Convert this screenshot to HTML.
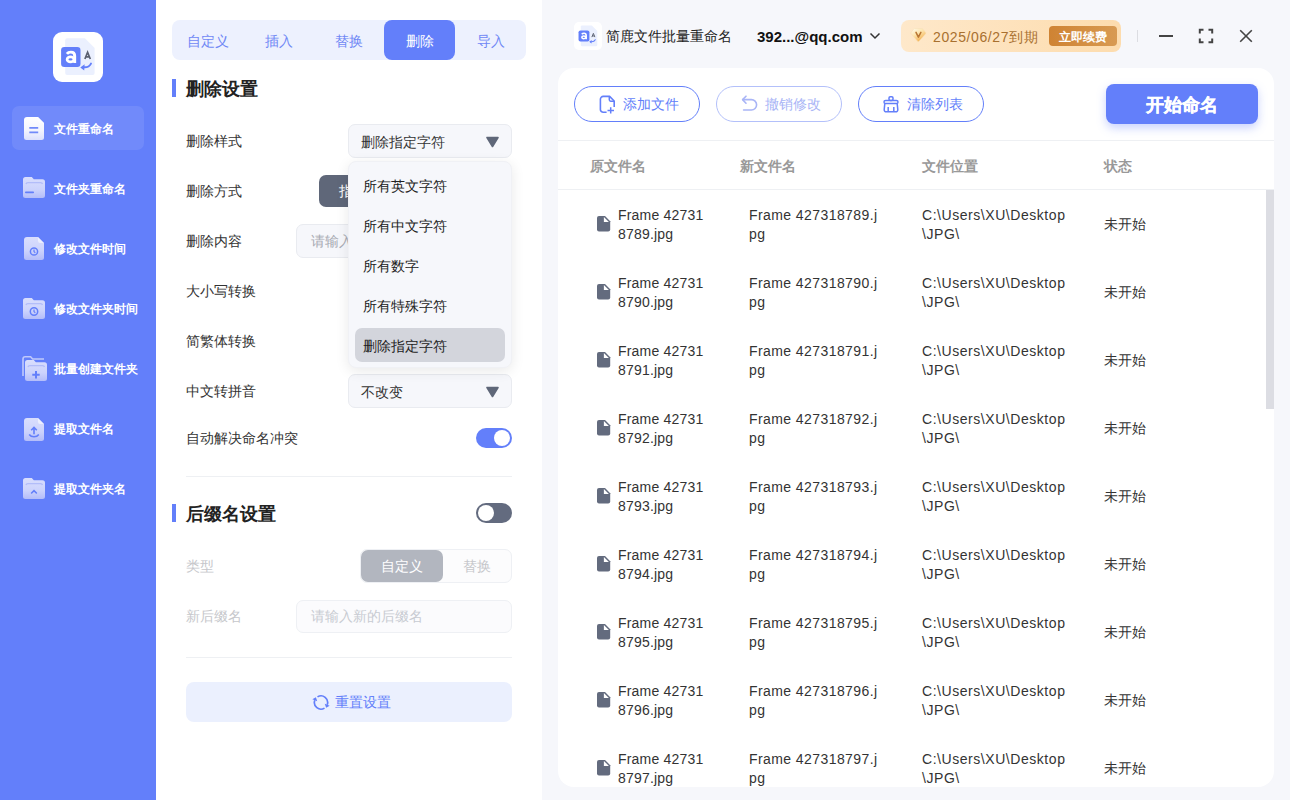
<!DOCTYPE html>
<html><head><meta charset="utf-8">
<style>
*{box-sizing:border-box;margin:0;padding:0}
html,body{width:1290px;height:800px;overflow:hidden}
body{position:relative;background:#f6f7fb;font-family:"Liberation Sans",sans-serif;font-size:14px;color:#333}
.abs{position:absolute}
#side{left:0;top:0;width:156px;height:800px;background:#637ffa}
#mid{left:156px;top:0;width:386px;height:800px;background:#fff}
.nav{position:absolute;left:12px;width:132px;height:44px;border-radius:7px}
.nav.on{background:rgba(255,255,255,.09)}
.nav svg{position:absolute;left:11px;top:10px}
.nav span{position:absolute;left:42px;top:1px;line-height:44px;font-size:12px;font-weight:bold;color:#fff;white-space:nowrap}
.tabs{left:172px;top:20px;width:354px;height:40px;background:#edf1fe;border-radius:8px}
.tab{position:absolute;top:0;height:40px;line-height:42px;text-align:center;color:#7088f5;font-size:14px}
.tab.on{background:#637ffa;color:#fff;border-radius:8px}
.bar{position:absolute;left:172px;width:4px;height:18px;background:#637ffa}
.h{position:absolute;left:186px;font-size:18px;font-weight:bold;color:#222;line-height:24px}
.lbl{position:absolute;left:186px;font-size:14px;color:#333;line-height:20px}
.sel{position:absolute;background:#f6f7fb;border:1px solid #e9ebf0;border-radius:7px}
.tri{position:absolute;width:0;height:0;border-left:6.5px solid transparent;border-right:6.5px solid transparent;border-top:10px solid #5f6779}
.txt{position:absolute;white-space:nowrap;line-height:20px}
.tog{position:absolute;width:36px;height:20px;border-radius:10px}
.tog i{position:absolute;top:2px;width:16px;height:16px;border-radius:50%;background:#fff}
.hr{position:absolute;left:186px;width:326px;height:1px;background:#eef0f3}
#card{left:558px;top:68px;width:716px;height:719px;background:#fff;border-radius:16px;overflow:hidden}
.btn{position:absolute;top:86px;height:36px;border-radius:18px;border:1px solid #637ffa;color:#637ffa;font-size:14px;line-height:34px}
.th{position:absolute;top:156px;font-size:14px;font-weight:bold;color:#999;line-height:20px}
.row{position:absolute;left:0;width:708px;height:68px}
.fi{position:absolute;left:39px;top:26px;margin-left:.2px}
.st{position:absolute;left:546px;top:24px;line-height:20px;font-size:14px;color:#333}
.cell{position:absolute;top:16px;font-size:14px;line-height:19px;color:#333;white-space:nowrap}
</style></head><body>
<div id="side" class="abs">
  <svg width="50" height="50" viewBox="0 0 50 50" style="position:absolute;left:53px;top:32px"><rect width="50" height="50" rx="9" fill="#fff"/><path d="M14.2 6.2H31.9L41.6 15.9V41.1A2 2 0 0 1 39.6 43.1H14.2A2 2 0 0 1 12.2 41.1V8.2A2 2 0 0 1 14.2 6.2Z" fill="#ebf0fe"/><rect x="8.1" y="15" width="19.4" height="20" rx="3.2" fill="#637ffa"/><path d="M13.9 21.9C14.9 20.6 16.3 20.1 17.9 20.1C20.5 20.1 21.7 21.4 21.7 23.9V30.9" stroke="#fff" stroke-width="2.9" fill="none"/><ellipse cx="17.5" cy="27.4" rx="3.4" ry="2.5" stroke="#fff" stroke-width="2.7" fill="none"/><path d="M31.9 27L34.6 20.3L37.3 27M32.8 24.9H36.4" stroke="#5a6070" stroke-width="1.7" fill="none"/><path d="M38 31.6C36.5 34.5 33.5 35.6 30.2 35.2" stroke="#637ffa" stroke-width="1.9" fill="none" stroke-linecap="round"/><path d="M27.3 35.4L31.6 32.3L31.2 38.6Z" fill="#637ffa"/></svg>
  <svg width="0" height="0" style="position:absolute"><defs>
<linearGradient id="gw" x1="0" y1="0" x2="0" y2="1"><stop offset="0" stop-color="#ffffff"/><stop offset=".55" stop-color="#f4f5fe"/><stop offset="1" stop-color="#d9defd"/></linearGradient>
<linearGradient id="gl" x1="0" y1="0" x2="0" y2="1"><stop offset="0" stop-color="#d9defd"/><stop offset=".6" stop-color="#ccd3fc"/><stop offset="1" stop-color="#b4bdf9"/></linearGradient>
</defs></svg>
<svg class="abs" style="left:24px;top:117px" width="20" height="23" viewBox="0 0 20 23"><path d="M3 0H14L20 6V20.5A2.5 2.5 0 0 1 17.5 23H2.5A2.5 2.5 0 0 1 0 20.5V3A3 3 0 0 1 3 0Z" fill="url(#gw)"/><path d="M14 0V3.8A2.2 2.2 0 0 0 16.2 6H20Z" fill="#fff" opacity=".55"/><path d="M5.3 10.8H14.2M5.3 15.3H14.2" stroke="#637ffa" stroke-width="1.8"/></svg>
<svg class="abs" style="left:23px;top:177px" width="22" height="21" viewBox="0 0 22 21"><path d="M2.5 0H8.8L10.8 2.2H19.5A2.5 2.5 0 0 1 22 4.7V18.5A2.5 2.5 0 0 1 19.5 21H2.5A2.5 2.5 0 0 1 0 18.5V2.5A2.5 2.5 0 0 1 2.5 0Z" fill="url(#gl)"/><path d="M3 7A2 2 0 0 1 5 5.6H17.5A2 2 0 0 1 19.5 7" stroke="#aab5f8" stroke-width="1.4" fill="none" opacity=".8"/><path d="M2.8 15.4H10.2" stroke="#637ffa" stroke-width="1.6" stroke-linecap="round"/></svg>
<svg class="abs" style="left:24px;top:237px" width="20" height="23" viewBox="0 0 20 23"><path d="M3 0H14L20 6V20.5A2.5 2.5 0 0 1 17.5 23H2.5A2.5 2.5 0 0 1 0 20.5V3A3 3 0 0 1 3 0Z" fill="url(#gl)"/><path d="M14 0V3.8A2.2 2.2 0 0 0 16.2 6H20Z" fill="#fff" opacity=".55"/><circle cx="10" cy="14.5" r="3.6" stroke="#637ffa" stroke-width="1.5" fill="none"/><path d="M10 12.6V14.6L11.3 15.8" stroke="#637ffa" stroke-width="1.2" fill="none"/></svg>
<svg class="abs" style="left:23px;top:298px" width="22" height="21" viewBox="0 0 22 21"><path d="M2.5 0H8.8L10.8 2.2H19.5A2.5 2.5 0 0 1 22 4.7V18.5A2.5 2.5 0 0 1 19.5 21H2.5A2.5 2.5 0 0 1 0 18.5V2.5A2.5 2.5 0 0 1 2.5 0Z" fill="url(#gl)"/><path d="M3 7A2 2 0 0 1 5 5.6H17.5A2 2 0 0 1 19.5 7" stroke="#aab5f8" stroke-width="1.4" fill="none" opacity=".8"/><circle cx="11" cy="13.5" r="3.7" stroke="#637ffa" stroke-width="1.5" fill="none"/><path d="M11 11.6V13.6L12.3 14.8" stroke="#637ffa" stroke-width="1.2" fill="none"/></svg>
<svg class="abs" style="left:22px;top:356px" width="25" height="25" viewBox="0 0 25 25"><path d="M1 20V3A2.2 2.2 0 0 1 3.2 0.8H8.6L10.6 3H22" stroke="#d0d6fc" stroke-width="1.6" fill="none" opacity=".85"/><g transform="translate(3,4)"><path d="M2.5 0H8.8L10.8 2.2H19.5A2.5 2.5 0 0 1 22 4.7V18.5A2.5 2.5 0 0 1 19.5 21H2.5A2.5 2.5 0 0 1 0 18.5V2.5A2.5 2.5 0 0 1 2.5 0Z" fill="url(#gl)"/><path d="M3 7A2 2 0 0 1 5 5.6H17.5A2 2 0 0 1 19.5 7" stroke="#aab5f8" stroke-width="1.4" fill="none" opacity=".8"/><path d="M11 11V18.4M7.3 14.7H14.7" stroke="#637ffa" stroke-width="2"/></g></svg>
<svg class="abs" style="left:24px;top:418px" width="20" height="23" viewBox="0 0 20 23"><path d="M3 0H14L20 6V20.5A2.5 2.5 0 0 1 17.5 23H2.5A2.5 2.5 0 0 1 0 20.5V3A3 3 0 0 1 3 0Z" fill="url(#gl)"/><path d="M14 0V3.8A2.2 2.2 0 0 0 16.2 6H20Z" fill="#fff" opacity=".55"/><path d="M10 16.2V9.6M7.2 12.2L10 9.4L12.8 12.2" stroke="#637ffa" stroke-width="1.6" fill="none"/><path d="M5.2 16.5C6.5 18.3 8.2 18.8 10 18.8S13.5 18.3 14.8 16.5" stroke="#637ffa" stroke-width="1.5" fill="none"/></svg>
<svg class="abs" style="left:23px;top:478px" width="22" height="21" viewBox="0 0 22 21"><path d="M2.5 0H8.8L10.8 2.2H19.5A2.5 2.5 0 0 1 22 4.7V18.5A2.5 2.5 0 0 1 19.5 21H2.5A2.5 2.5 0 0 1 0 18.5V2.5A2.5 2.5 0 0 1 2.5 0Z" fill="url(#gl)"/><path d="M3 7A2 2 0 0 1 5 5.6H17.5A2 2 0 0 1 19.5 7" stroke="#aab5f8" stroke-width="1.4" fill="none" opacity=".8"/><path d="M8.6 15L11 12.6L13.4 15" stroke="#637ffa" stroke-width="1.6" fill="none" stroke-linecap="round"/></svg>
<div class="nav on" style="top:106px"><span>文件重命名</span></div>
  <div class="nav" style="top:166px"><span>文件夹重命名</span></div>
  <div class="nav" style="top:226px"><span>修改文件时间</span></div>
  <div class="nav" style="top:286px"><span>修改文件夹时间</span></div>
  <div class="nav" style="top:346px"><span>批量创建文件夹</span></div>
  <div class="nav" style="top:406px"><span>提取文件名</span></div>
  <div class="nav" style="top:466px"><span>提取文件夹名</span></div>
</div>
<div id="mid" class="abs"></div>
<div class="abs tabs">
  <div class="tab" style="left:0;width:71px">自定义</div>
  <div class="tab" style="left:71px;width:71px">插入</div>
  <div class="tab" style="left:141px;width:71px">替换</div>
  <div class="tab on" style="left:212px;width:71px">删除</div>
  <div class="tab" style="left:283px;width:71px">导入</div>
</div>
<div class="bar" style="top:79px"></div>
<div class="h" style="top:77px">删除设置</div>

<div class="lbl" style="top:131px">删除样式</div>
<div class="lbl" style="top:181px">删除方式</div>
<div class="lbl" style="top:231px">删除内容</div>
<div class="lbl" style="top:281px">大小写转换</div>
<div class="lbl" style="top:331px">简繁体转换</div>
<div class="lbl" style="top:381px">中文转拼音</div>
<div class="lbl" style="top:428px">自动解决命名冲突</div>

<div class="sel" style="left:348px;top:124px;width:164px;height:34px"></div>
<div class="txt" style="left:361px;top:132px">删除指定字符</div>
<svg class="abs" style="left:485px;top:136px" width="15" height="12" viewBox="0 0 15 12"><path d="M2 1.5H13L7.5 10.5Z" fill="#5f6779" stroke="#5f6779" stroke-width="1.6" stroke-linejoin="round"/></svg>

<div class="abs" style="left:319px;top:175px;width:60px;height:32px;background:#5f6779;border-radius:7px"></div>
<div class="txt" style="left:339px;top:181px;color:#fff">指定</div>

<div class="sel" style="left:296px;top:224px;width:216px;height:34px"></div>
<div class="txt" style="left:311px;top:231px;color:#a8abb3">请输入</div>

<div class="sel" style="left:348px;top:374px;width:164px;height:34px"></div>
<div class="txt" style="left:361px;top:382px">不改变</div>
<svg class="abs" style="left:485px;top:386px" width="15" height="12" viewBox="0 0 15 12"><path d="M2 1.5H13L7.5 10.5Z" fill="#5f6779" stroke="#5f6779" stroke-width="1.6" stroke-linejoin="round"/></svg>

<div class="tog" style="left:476px;top:428px;background:#637ffa"><i style="left:18px"></i></div>
<div class="hr" style="top:476px"></div>

<!-- dropdown -->
<div class="abs" style="left:348px;top:161px;width:164px;height:207px;background:#f6f7fb;border:1px solid #f0f1f5;border-radius:8px;box-shadow:0 3px 14px rgba(0,0,0,.09)"></div>
<div class="txt" style="left:363px;top:176px;color:#222">所有英文字符</div>
<div class="txt" style="left:363px;top:216px;color:#222">所有中文字符</div>
<div class="txt" style="left:363px;top:256px;color:#222">所有数字</div>
<div class="txt" style="left:363px;top:296px;color:#222">所有特殊字符</div>
<div class="abs" style="left:355px;top:328px;width:150px;height:34px;background:#d3d5dc;border-radius:7px"></div>
<div class="txt" style="left:363px;top:336px;color:#222">删除指定字符</div>

<div class="bar" style="top:504px"></div>
<div class="h" style="top:502px">后缀名设置</div>
<div class="tog" style="left:476px;top:503px;background:#636b7f"><i style="left:2px"></i></div>

<div class="lbl" style="top:556px;color:#c6c7cb">类型</div>
<div class="abs" style="left:360px;top:549px;width:152px;height:34px;border:1px solid #eef0f4;border-radius:7px;background:#fcfcfd"></div>
<div class="abs" style="left:361px;top:550px;width:82px;height:32px;background:#b2b6bf;border-radius:7px"></div>
<div class="txt" style="left:381px;top:556px;color:#fff">自定义</div>
<div class="txt" style="left:463px;top:556px;color:#c6c7cb">替换</div>

<div class="lbl" style="top:606px;color:#c6c7cb">新后缀名</div>
<div class="sel" style="left:296px;top:600px;width:216px;height:33px;background:#fbfbfd;border-color:#eef0f4"></div>
<div class="txt" style="left:311px;top:606px;color:#c8cbd2">请输入新的后缀名</div>

<div class="hr" style="top:657px"></div>
<div class="abs" style="left:186px;top:682px;width:326px;height:40px;background:#ebf0fe;border-radius:8px"></div>
<div class="txt" style="left:335px;top:692px;color:#637ffa">重置设置</div>

<!-- right header -->
<svg width="28" height="28" viewBox="0 0 50 50" style="position:absolute;left:574px;top:22px"><rect width="50" height="50" rx="9" fill="#fff"/><path d="M14.2 6.2H31.9L41.6 15.9V41.1A2 2 0 0 1 39.6 43.1H14.2A2 2 0 0 1 12.2 41.1V8.2A2 2 0 0 1 14.2 6.2Z" fill="#ebf0fe"/><rect x="8.1" y="15" width="19.4" height="20" rx="3.2" fill="#637ffa"/><path d="M13.9 21.9C14.9 20.6 16.3 20.1 17.9 20.1C20.5 20.1 21.7 21.4 21.7 23.9V30.9" stroke="#fff" stroke-width="2.9" fill="none"/><ellipse cx="17.5" cy="27.4" rx="3.4" ry="2.5" stroke="#fff" stroke-width="2.7" fill="none"/><path d="M31.9 27L34.6 20.3L37.3 27M32.8 24.9H36.4" stroke="#5a6070" stroke-width="1.7" fill="none"/><path d="M38 31.6C36.5 34.5 33.5 35.6 30.2 35.2" stroke="#637ffa" stroke-width="1.9" fill="none" stroke-linecap="round"/><path d="M27.3 35.4L31.6 32.3L31.2 38.6Z" fill="#637ffa"/></svg>
<div class="txt" style="left:606px;top:26px;color:#222">简鹿文件批量重命名</div>
<div class="txt" style="left:757px;top:27px;color:#111;font-weight:bold;font-size:15px">392...@qq.com</div>
<div class="abs" style="left:901px;top:20px;width:220px;height:32px;border-radius:8px;background:linear-gradient(90deg,#fee8ca,#fddcae)"></div>
<div class="txt" style="left:933px;top:27px;color:#a8702f;letter-spacing:.6px">2025/06/27到期</div>
<div class="abs" style="left:1049px;top:26px;width:68px;height:20px;border-radius:4px;background:linear-gradient(90deg,#cf8333,#d89a52)"></div>
<div class="txt" style="left:1059px;top:27px;color:#fff;font-size:12px;font-weight:bold">立即续费</div>

<div id="card" class="abs"></div>
<div class="btn" style="left:574px;width:126px"><span style="position:absolute;left:48px">添加文件</span></div>
<div class="btn" style="left:716px;width:126px;border-color:#b3c0fa;color:#a9b5f6"><span style="position:absolute;left:48px">撤销修改</span></div>
<div class="btn" style="left:858px;width:126px"><span style="position:absolute;left:48px">清除列表</span></div>
<div class="abs" style="left:1106px;top:84px;width:152px;height:40px;border-radius:8px;background:#637ffa;box-shadow:0 4px 10px rgba(99,127,250,.35);color:#fff;font-size:18px;font-weight:bold;text-align:center;line-height:42px;-webkit-text-stroke:.3px #fff">开始命名</div>
<div class="abs" style="left:558px;top:140px;width:716px;height:1px;background:#eef0f3"></div>
<div class="th" style="left:590px">原文件名</div>
<div class="th" style="left:740px">新文件名</div>
<div class="th" style="left:922px">文件位置</div>
<div class="th" style="left:1104px">状态</div>
<div class="abs" style="left:558px;top:189px;width:716px;height:1px;background:#eef0f3"></div>
<div class="abs" style="left:1266px;top:190px;width:8px;height:219px;background:#dcdde3"></div>
<div id="rows" class="abs" style="left:558px;top:190px;width:708px;height:597px;overflow:hidden">
<div class="row" style="top:0px">
<svg class="fi" width="14" height="16" viewBox="0 0 14 16"><path d="M2 0H8L13.2 5.2V13.6A2 2 0 0 1 11.2 15.6H2A2 2 0 0 1 0 13.6V2A2 2 0 0 1 2 0Z" fill="#636b7e"/><path d="M6.9 0.9V5.9H11.9Z" fill="#fff"/></svg>
<div class="cell" style="left:60px;letter-spacing:.2px">Frame 42731<br>8789.jpg</div>
<div class="cell" style="left:191px;letter-spacing:.42px">Frame 427318789.j<br>pg</div>
<div class="cell" style="left:364px;letter-spacing:.55px">C:\Users\XU\Desktop<br>\JPG\</div>
<div class="st">未开始</div>
</div>
<div class="row" style="top:68px">
<svg class="fi" width="14" height="16" viewBox="0 0 14 16"><path d="M2 0H8L13.2 5.2V13.6A2 2 0 0 1 11.2 15.6H2A2 2 0 0 1 0 13.6V2A2 2 0 0 1 2 0Z" fill="#636b7e"/><path d="M6.9 0.9V5.9H11.9Z" fill="#fff"/></svg>
<div class="cell" style="left:60px;letter-spacing:.2px">Frame 42731<br>8790.jpg</div>
<div class="cell" style="left:191px;letter-spacing:.42px">Frame 427318790.j<br>pg</div>
<div class="cell" style="left:364px;letter-spacing:.55px">C:\Users\XU\Desktop<br>\JPG\</div>
<div class="st">未开始</div>
</div>
<div class="row" style="top:136px">
<svg class="fi" width="14" height="16" viewBox="0 0 14 16"><path d="M2 0H8L13.2 5.2V13.6A2 2 0 0 1 11.2 15.6H2A2 2 0 0 1 0 13.6V2A2 2 0 0 1 2 0Z" fill="#636b7e"/><path d="M6.9 0.9V5.9H11.9Z" fill="#fff"/></svg>
<div class="cell" style="left:60px;letter-spacing:.2px">Frame 42731<br>8791.jpg</div>
<div class="cell" style="left:191px;letter-spacing:.42px">Frame 427318791.j<br>pg</div>
<div class="cell" style="left:364px;letter-spacing:.55px">C:\Users\XU\Desktop<br>\JPG\</div>
<div class="st">未开始</div>
</div>
<div class="row" style="top:204px">
<svg class="fi" width="14" height="16" viewBox="0 0 14 16"><path d="M2 0H8L13.2 5.2V13.6A2 2 0 0 1 11.2 15.6H2A2 2 0 0 1 0 13.6V2A2 2 0 0 1 2 0Z" fill="#636b7e"/><path d="M6.9 0.9V5.9H11.9Z" fill="#fff"/></svg>
<div class="cell" style="left:60px;letter-spacing:.2px">Frame 42731<br>8792.jpg</div>
<div class="cell" style="left:191px;letter-spacing:.42px">Frame 427318792.j<br>pg</div>
<div class="cell" style="left:364px;letter-spacing:.55px">C:\Users\XU\Desktop<br>\JPG\</div>
<div class="st">未开始</div>
</div>
<div class="row" style="top:272px">
<svg class="fi" width="14" height="16" viewBox="0 0 14 16"><path d="M2 0H8L13.2 5.2V13.6A2 2 0 0 1 11.2 15.6H2A2 2 0 0 1 0 13.6V2A2 2 0 0 1 2 0Z" fill="#636b7e"/><path d="M6.9 0.9V5.9H11.9Z" fill="#fff"/></svg>
<div class="cell" style="left:60px;letter-spacing:.2px">Frame 42731<br>8793.jpg</div>
<div class="cell" style="left:191px;letter-spacing:.42px">Frame 427318793.j<br>pg</div>
<div class="cell" style="left:364px;letter-spacing:.55px">C:\Users\XU\Desktop<br>\JPG\</div>
<div class="st">未开始</div>
</div>
<div class="row" style="top:340px">
<svg class="fi" width="14" height="16" viewBox="0 0 14 16"><path d="M2 0H8L13.2 5.2V13.6A2 2 0 0 1 11.2 15.6H2A2 2 0 0 1 0 13.6V2A2 2 0 0 1 2 0Z" fill="#636b7e"/><path d="M6.9 0.9V5.9H11.9Z" fill="#fff"/></svg>
<div class="cell" style="left:60px;letter-spacing:.2px">Frame 42731<br>8794.jpg</div>
<div class="cell" style="left:191px;letter-spacing:.42px">Frame 427318794.j<br>pg</div>
<div class="cell" style="left:364px;letter-spacing:.55px">C:\Users\XU\Desktop<br>\JPG\</div>
<div class="st">未开始</div>
</div>
<div class="row" style="top:408px">
<svg class="fi" width="14" height="16" viewBox="0 0 14 16"><path d="M2 0H8L13.2 5.2V13.6A2 2 0 0 1 11.2 15.6H2A2 2 0 0 1 0 13.6V2A2 2 0 0 1 2 0Z" fill="#636b7e"/><path d="M6.9 0.9V5.9H11.9Z" fill="#fff"/></svg>
<div class="cell" style="left:60px;letter-spacing:.2px">Frame 42731<br>8795.jpg</div>
<div class="cell" style="left:191px;letter-spacing:.42px">Frame 427318795.j<br>pg</div>
<div class="cell" style="left:364px;letter-spacing:.55px">C:\Users\XU\Desktop<br>\JPG\</div>
<div class="st">未开始</div>
</div>
<div class="row" style="top:476px">
<svg class="fi" width="14" height="16" viewBox="0 0 14 16"><path d="M2 0H8L13.2 5.2V13.6A2 2 0 0 1 11.2 15.6H2A2 2 0 0 1 0 13.6V2A2 2 0 0 1 2 0Z" fill="#636b7e"/><path d="M6.9 0.9V5.9H11.9Z" fill="#fff"/></svg>
<div class="cell" style="left:60px;letter-spacing:.2px">Frame 42731<br>8796.jpg</div>
<div class="cell" style="left:191px;letter-spacing:.42px">Frame 427318796.j<br>pg</div>
<div class="cell" style="left:364px;letter-spacing:.55px">C:\Users\XU\Desktop<br>\JPG\</div>
<div class="st">未开始</div>
</div>
<div class="row" style="top:544px">
<svg class="fi" width="14" height="16" viewBox="0 0 14 16"><path d="M2 0H8L13.2 5.2V13.6A2 2 0 0 1 11.2 15.6H2A2 2 0 0 1 0 13.6V2A2 2 0 0 1 2 0Z" fill="#636b7e"/><path d="M6.9 0.9V5.9H11.9Z" fill="#fff"/></svg>
<div class="cell" style="left:60px;letter-spacing:.2px">Frame 42731<br>8797.jpg</div>
<div class="cell" style="left:191px;letter-spacing:.42px">Frame 427318797.j<br>pg</div>
<div class="cell" style="left:364px;letter-spacing:.55px">C:\Users\XU\Desktop<br>\JPG\</div>
<div class="st">未开始</div>
</div>
</div>

<svg class="abs" style="left:599px;top:95px" width="17" height="19" viewBox="0 0 17 19"><path d="M7.6 17.2H4.2A2.8 2.8 0 0 1 1.4 14.4V4.2A2.8 2.8 0 0 1 4.2 1.4H10.6L15.2 6V12" stroke="#637ffa" stroke-width="1.6" fill="none" stroke-linejoin="round"/><path d="M10.3 1.6V4.8A1.4 1.4 0 0 0 11.7 6.2H15" stroke="#637ffa" stroke-width="1.5" fill="none"/><path d="M11.7 12.2V18.6M8.5 15.4H15" stroke="#637ffa" stroke-width="1.5"/></svg>
<svg class="abs" style="left:741px;top:95px" width="17" height="17" viewBox="0 0 17 17"><path d="M5 1.2L1.6 4.6L5 8.2" stroke="#a9b5f6" stroke-width="1.6" fill="none" stroke-linecap="round" stroke-linejoin="round"/><path d="M1.8 4.6H10.4A5.2 5.2 0 0 1 10.4 15H2.6" stroke="#a9b5f6" stroke-width="1.6" fill="none" stroke-linecap="round"/></svg>
<svg class="abs" style="left:883px;top:96px" width="16" height="17" viewBox="0 0 16 17"><rect x="6" y="0.8" width="4" height="3.6" rx="1.2" stroke="#637ffa" stroke-width="1.5" fill="none"/><rect x="1" y="4.4" width="14" height="3.2" rx="1.6" stroke="#637ffa" stroke-width="1.5" fill="none"/><path d="M1.8 7.6L1.2 13.6A2 2 0 0 0 3.2 15.8H12.8A2 2 0 0 0 14.8 13.6L14.2 7.6M5.2 11V15.6M10.8 11V15.6" stroke="#637ffa" stroke-width="1.5" fill="none"/></svg>
<svg class="abs" style="left:312px;top:694px" width="18" height="17" viewBox="0 0 18 17"><path d="M5.50 2.90A6.6 6.6 0 0 1 15.20 10.76" stroke="#637ffa" stroke-width="1.7" fill="none"/><path d="M14.11 13.76L17.65 11.65L12.76 9.87Z" fill="#637ffa"/><path d="M12.50 14.10A6.6 6.6 0 0 1 2.80 6.24" stroke="#637ffa" stroke-width="1.7" fill="none"/><path d="M3.89 3.24L0.35 5.35L5.24 7.13Z" fill="#637ffa"/></svg>
<svg class="abs" style="left:910px;top:28px" width="17" height="15" viewBox="0 0 17 15"><defs><linearGradient id="gd" x1="0" y1="0" x2="0.7" y2="1"><stop offset="0" stop-color="#fffdf4"/><stop offset=".45" stop-color="#fde6b0"/><stop offset="1" stop-color="#f3aa45"/></linearGradient></defs><path d="M4.6 0.6H11.6Q12.4 0.6 13 1.3L15.6 4.4Q16.2 5.1 15.6 5.8L9 13.2Q8.3 14 7.6 13.2L1.2 5.8Q0.6 5.1 1.2 4.4L3.4 1.3Q3.9 0.6 4.6 0.6Z" fill="url(#gd)" stroke="#f6dcb0" stroke-width=".5"/><path d="M6 4.3L8.4 9.1L10.9 4.3" stroke="#b97633" stroke-width="1.5" fill="none" stroke-linecap="round" stroke-linejoin="round"/></svg>
<svg class="abs" style="left:869px;top:32px" width="12" height="8" viewBox="0 0 12 8"><path d="M1.5 1.5L6 6L10.5 1.5" stroke="#333" stroke-width="1.5" fill="none"/></svg>
<div class="abs" style="left:1137px;top:30px;width:1px;height:12px;background:#dcdde2"></div>
<div class="abs" style="left:1159px;top:35px;width:14px;height:2px;background:#444"></div>
<svg class="abs" style="left:1198px;top:28px" width="16" height="16" viewBox="0 0 16 16"><path d="M1.8 5.5V1.8H5.5M10.5 1.8H14.2V5.5M14.2 10.5V14.2H10.5M5.5 14.2H1.8V10.5" stroke="#444" stroke-width="2" fill="none"/></svg>
<svg class="abs" style="left:1239px;top:29px" width="14" height="14" viewBox="0 0 14 14"><path d="M1.2 1.2L12.8 12.8M12.8 1.2L1.2 12.8" stroke="#444" stroke-width="1.6"/></svg>
</body></html>
